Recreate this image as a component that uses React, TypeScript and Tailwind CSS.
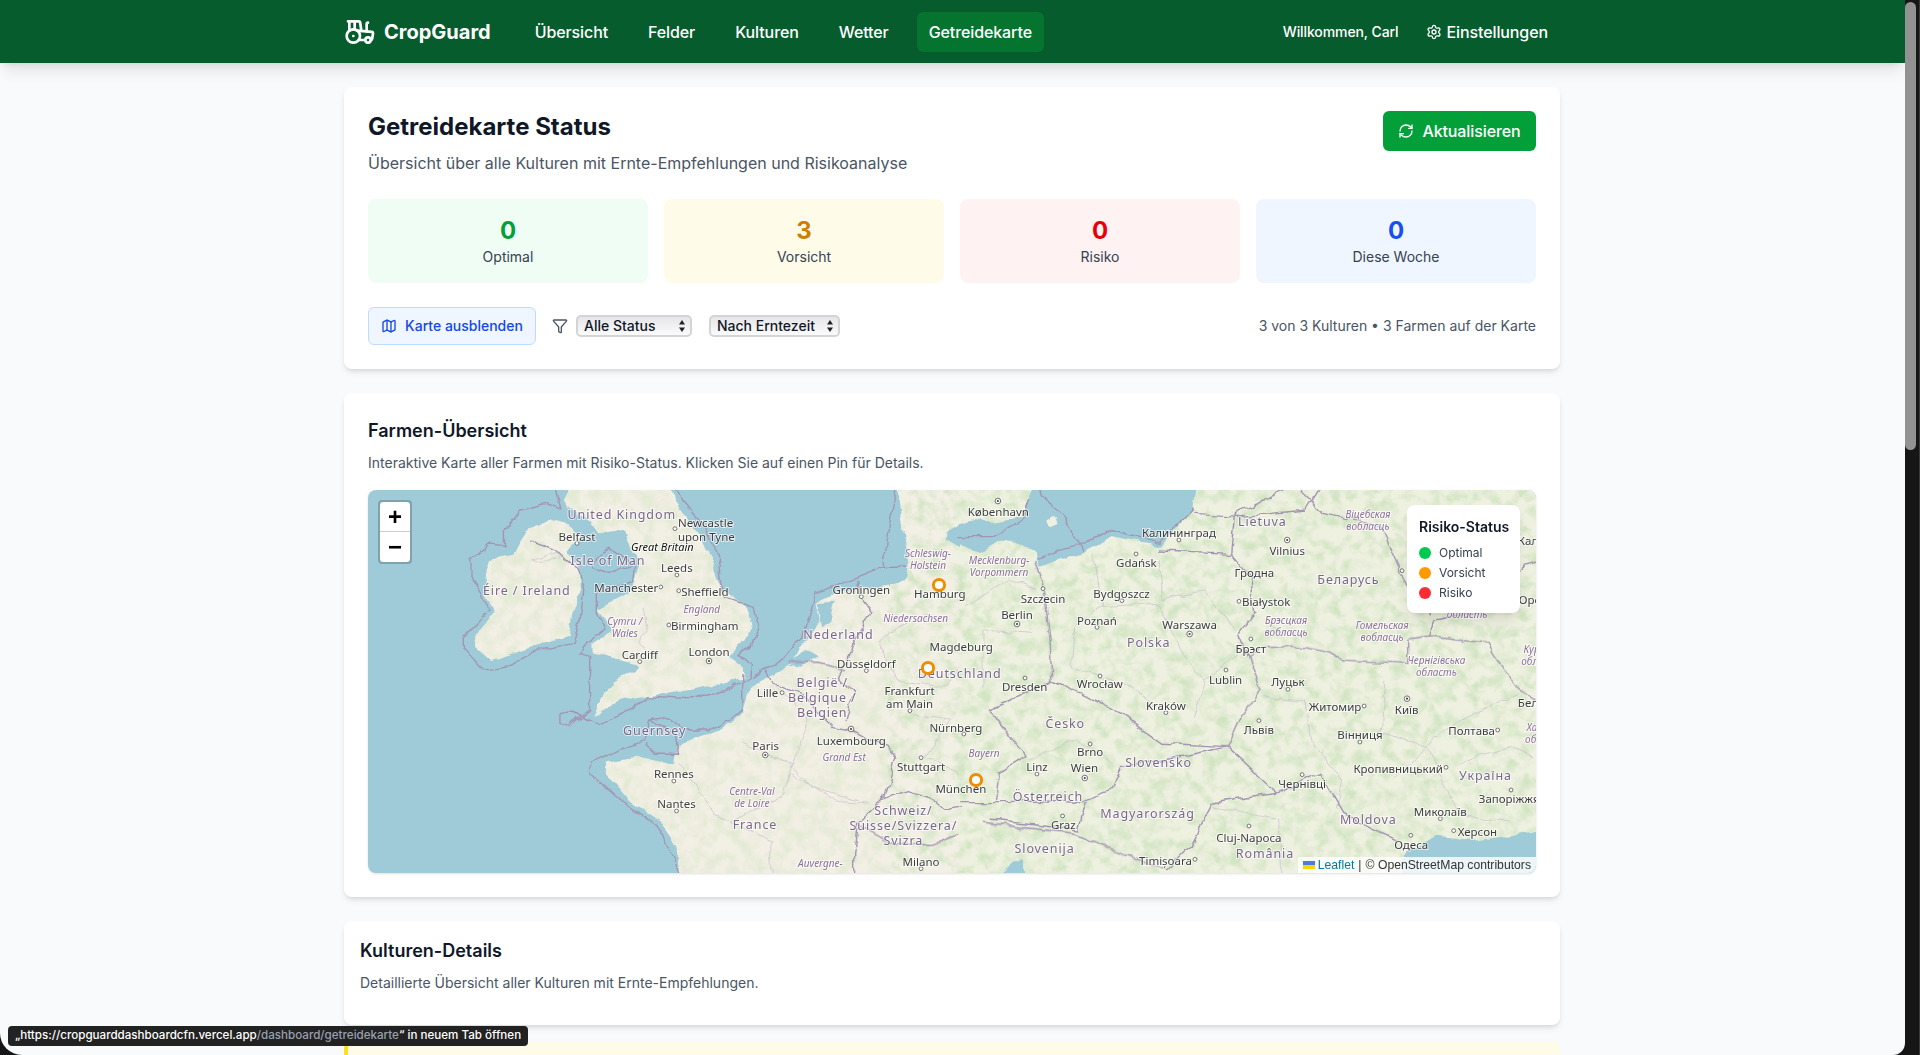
import { Filter, Map as MapIcon, RefreshCw, Settings, Tractor } from 'lucide-react';

type Kind = 'city' | 'country' | 'region' | 'island';
type Label = [string, number, number, Kind];

// label positions are measured on two crops of the map, these turn them into map pixels
const westX = (x: number) => x / 2.613 - 8;
const eastX = (x: number) => x / 2.613 + 592;
const mapY = (y: number) => y / 3 - 10;

const westLabels: Label[] = [
  ['United Kingdom', 684, 102, 'country'],
  ['Newcastle', 903, 127, 'city'],
  ['upon Tyne', 905, 168, 'city'],
  ['Belfast', 567, 168, 'city'],
  ['Great Britain', 790, 200, 'island'],
  ['Isle of Man', 648, 240, 'country'],
  ['Leeds', 828, 262, 'city'],
  ['Manchester', 696, 322, 'city'],
  ['Sheffield', 901, 334, 'city'],
  ['Éire / Ireland', 436, 331, 'country'],
  ['England', 893, 388, 'region'],
  ['Cymru /', 692, 422, 'region'],
  ['Wales', 692, 458, 'region'],
  ['Birmingham', 901, 437, 'city'],
  ['Cardiff', 731, 522, 'city'],
  ['London', 912, 514, 'city'],
  ['Groningen', 1310, 329, 'city'],
  ['Schleswig-', 1484, 218, 'region'],
  ['Holstein', 1484, 254, 'region'],
  ['Hamburg', 1515, 340, 'city'],
  ['Niedersachsen', 1452, 414, 'region'],
  ['Nederland', 1250, 462, 'country'],
  ['Düsseldorf', 1323, 550, 'city'],
  ['België /', 1208, 607, 'country'],
  ['Belgique /', 1208, 652, 'country'],
  ['Belgien', 1208, 697, 'country'],
  ['Frankfurt', 1436, 630, 'city'],
  ['am Main', 1436, 671, 'city'],
  ['Lille', 1065, 638, 'city'],
  ['Guernsey', 770, 752, 'country'],
  ['Luxembourg', 1284, 780, 'city'],
  ['Paris', 1060, 797, 'city'],
  ['Grand Est', 1265, 832, 'region'],
  ['Stuttgart', 1466, 860, 'city'],
  ['Rennes', 820, 880, 'city'],
  ['Nantes', 827, 970, 'city'],
  ['Centre-Val', 1024, 932, 'region'],
  ['de Loire', 1024, 968, 'region'],
  ['France', 1032, 1034, 'country'],
  ['Schweiz/', 1420, 990, 'country'],
  ['Suisse/Svizzera/', 1420, 1035, 'country'],
  ['Svizra', 1420, 1080, 'country'],
  ['Milano', 1466, 1143, 'city'],
  ['Auvergne-', 1203, 1150, 'region'],
  ['Magdeburg', 1571, 500, 'city'],
  ['Deutschland', 1567, 580, 'country'],
  ['Nürnberg', 1557, 741, 'city'],
  ['München', 1570, 926, 'city'],
];

const eastLabels: Label[] = [
  ['København', 100, 94, 'city'],
  ['Калининград', 572, 156, 'city'],
  ['Lietuva', 790, 125, 'country'],
  ['Vilnius', 855, 211, 'city'],
  ['Гродна', 769, 276, 'city'],
  ['Gdańsk', 461, 247, 'city'],
  ['Mecklenburg-', 102, 240, 'region'],
  ['Vorpommern', 102, 276, 'region'],
  ['Szczecin', 217, 354, 'city'],
  ['Bydgoszcz', 422, 340, 'city'],
  ['Białystok', 800, 364, 'city'],
  ['Berlin', 149, 402, 'city'],
  ['Poznań', 358, 420, 'city'],
  ['Warszawa', 600, 434, 'city'],
  ['Polska', 493, 487, 'country'],
  ['Брэст', 760, 505, 'city'],
  ['Dresden', 169, 619, 'city'],
  ['Wrocław', 365, 611, 'city'],
  ['Lublin', 694, 598, 'city'],
  ['Луцьк', 857, 604, 'city'],
  ['Київ', 1167, 688, 'city'],
  ['Kraków', 538, 676, 'city'],
  ['Житомир', 980, 680, 'city'],
  ['Česko', 275, 731, 'country'],
  ['Львів', 781, 749, 'city'],
  ['Вінниця', 1045, 764, 'city'],
  ['Полтава', 1337, 750, 'city'],
  ['Brno', 340, 815, 'city'],
  ['Bayern', 63, 818, 'region'],
  ['Slovensko', 519, 847, 'country'],
  ['Linz', 201, 859, 'city'],
  ['Wien', 325, 863, 'city'],
  ['Кропивницький', 1145, 864, 'city'],
  ['Україна', 1373, 887, 'country'],
  ['Чернівці', 894, 911, 'city'],
  ['Österreich', 230, 950, 'country'],
  ['Запоріжжя', 1435, 956, 'city'],
  ['Миколаїв', 1255, 994, 'city'],
  ['Magyarország', 490, 1001, 'country'],
  ['Moldova', 1067, 1019, 'country'],
  ['Graz', 270, 1034, 'city'],
  ['Херсон', 1352, 1053, 'city'],
  ['Cluj-Napoca', 755, 1071, 'city'],
  ['Одеса', 1179, 1093, 'city'],
  ['Slovenija', 221, 1105, 'country'],
  ['România', 797, 1121, 'country'],
  ['Timișoara', 537, 1140, 'city'],
  ['Віцебская', 1066, 103, 'region'],
  ['вобласць', 1066, 139, 'region'],
  ['Брэсцкая', 852, 421, 'region'],
  ['вобласць', 852, 457, 'region'],
  ['Гомельская', 1103, 436, 'region'],
  ['вобласць', 1103, 472, 'region'],
  ['Чернігівська', 1245, 541, 'region'],
  ['область', 1245, 577, 'region'],
  ['Беларусь', 1015, 297, 'country'],
  ['Курська', 1520, 508, 'region'],
  ['область', 1520, 544, 'region'],
  ['Харківська', 1545, 742, 'region'],
  ['область', 1530, 778, 'region'],
  ['Кал', 1484, 180, 'city'],
  ['Орел', 1498, 358, 'city'],
  ['Бел', 1484, 668, 'city'],
  ['область', 1325, 402, 'region'],
];

const westDots = [
  [823, 146], [567, 190], [828, 285], [786, 321], [833, 332], [807, 435], [731, 545],
  [1310, 350], [1323, 572], [1437, 692], [1103, 638], [1466, 833], [820, 903], [827, 993], [1466, 1166],
];
const westRings = [[912, 543], [1283, 747], [1059, 825]];
const eastDots = [
  [572, 180], [460, 222], [217, 326], [423, 362], [729, 364], [358, 442], [760, 477], [170, 594],
  [366, 588], [695, 570], [857, 628], [538, 698], [1056, 678], [781, 722], [1045, 786], [1405, 750],
  [340, 792], [201, 882], [1270, 862], [894, 884], [1440, 930], [1255, 1016], [1290, 1052], [755, 1038],
  [1178, 1066], [268, 1008], [614, 1138], [1155, 272], [10, 762],
];
const eastRings = [[99, 63], [149, 432], [600, 462], [855, 180], [326, 894], [1168, 656]];

const landWest = [
  'M440 145 L500 120 L540 130 L570 170 L540 215 L570 260 L575 330 L555 400 L545 470 L480 490 L400 520 L340 540 L310 510 L300 470 L335 420 L355 390 L330 350 L325 290 L340 240 L400 225 L420 180 Z',
  'M530 60 L560 0 L810 0 L820 60 L850 110 L890 170 L920 240 L950 330 L1010 380 L1025 430 L1005 490 L960 530 L1000 565 L1005 590 L960 615 L900 620 L840 635 L740 650 L680 665 L610 705 L640 650 L660 600 L720 570 L730 555 L680 540 L640 530 L605 520 L605 490 L660 450 L640 420 L620 390 L700 340 L720 300 L730 260 L700 190 L690 150 L620 160 L590 110 L540 80 Z',
  'M840 1220 L830 1100 L780 1020 L700 960 L640 880 L640 850 L740 830 L820 850 L830 790 L920 760 L1000 700 L1020 620 L1100 570 L1130 550 L1170 480 L1200 420 L1190 370 L1240 340 L1400 310 L1420 300 L1435 250 L1420 150 L1410 60 L1405 0 L1568 0 L1568 1220 Z',
];
const seaWest = [
  'M1568 130 L1540 150 L1530 180 L1568 205 Z',
  'M1195 370 L1240 365 L1225 420 L1205 440 Z',
  'M1120 560 L1165 510 L1200 535 L1140 565 Z',
];
const landEast = 'M-2 0 H1540 V1220 H-2 Z';
const seaEast = [
  'M200 0 L620 0 L610 90 L525 200 L460 185 L395 170 L320 215 L205 260 L195 215 L150 185 L100 185 L60 215 L-2 195 L-2 130 L40 120 L80 130 L160 110 L180 60 Z',
  'M1140 1220 L1170 1110 L1250 1070 L1350 1085 L1540 1050 L1540 1220 Z',
  'M100 1220 L130 1150 L170 1140 L170 1220 Z',
];
const islandEast = 'M225 125 L245 110 L255 135 L235 145 Z';

const bordersWest = [
  'M505 0 L525 90 L490 70 L420 90 L380 150 L380 200 L340 195 L290 240 L290 290 L340 390 L270 470 L270 500 L325 570 L390 560 L470 510 L560 490 L575 420 L585 330 L570 270 L520 215 L450 180',
  'M815 0 L840 60 L900 140 L940 250 L950 350 L1030 380 L1040 430 L1020 500 L985 530 L1025 550 L1025 590 L960 630 L870 660 L750 650 L720 680 L620 730 L560 700 L525 700 L525 730 L550 740 L570 715 L600 690 L600 530 L575 520 L610 470 L640 450 L620 400 L620 340 L715 300 L720 260 L650 205 L620 220 L610 260 L650 280 L710 260',
  'M1030 590 L1060 565 L1105 540 L1160 470 L1190 340 L1300 290 L1360 262 L1430 262',
  'M1000 580 L1000 690 L910 750 L860 750 L800 710 L760 720 L740 780 L600 850 L600 880 L680 960 L770 1030 L820 1130 L850 1220',
  'M745 790 L770 820 L830 820 L820 760 L760 720',
  'M1060 570 L1080 610 L1160 650 L1230 740 L1280 750 L1310 770 L1380 800 L1400 830 L1370 960 L1430 935 L1500 960 L1530 990 L1568 980',
  'M1370 960 L1300 1030 L1290 1120 L1290 1220',
  'M1300 300 L1310 350 L1340 400 L1290 480 L1280 520 L1250 590 L1290 640 L1270 720',
  'M1120 550 L1200 550 L1270 570',
  'M1300 1030 L1400 1095 L1500 1090 L1568 1060',
  'M1405 0 L1370 240 L1370 262',
];
const thinWest = [
  'M1080 610 L1170 720 L1130 860 L1180 920 L1300 960',
  'M1000 790 L1130 850 L1100 960 L970 1020 L930 1000 L830 850',
  'M1130 880 L1240 960 L1330 970',
  'M970 1020 L1070 1090 L1080 1220',
  'M1440 420 L1360 480 L1400 600 L1520 620 L1568 560',
  'M1430 700 L1540 720 L1480 830 L1568 880',
  'M740 380 L750 450 L730 490 L770 540',
  'M520 215 L450 240 L470 250 L530 225',
];
const bordersEast = [
  'M195 240 L220 330 L235 480 L240 600 L320 640 L420 700 L530 790 L700 800',
  'M240 600 L80 690 L100 720 L170 830 L100 880 L90 960',
  'M-2 965 L130 965 L190 960 L300 970 L320 960 L390 930 L420 860 L530 840 L700 800',
  'M700 800 L740 700 L785 630 L755 530 L800 500 L870 495 L970 520 L1000 540 L1170 550 L1170 480 L1230 470 L1380 490 L1450 620 L1540 690',
  'M520 210 L710 220 L760 290 L770 400 L730 460 L755 530',
  'M710 220 L720 100 L760 80 L890 0',
  'M610 100 L740 110 L900 90 L950 0',
  'M700 800 L830 940 L940 880 L1000 1000 L1140 1080',
  'M660 970 L600 1100 L540 1170',
  'M660 970 L830 940',
  'M80 1020 L310 1050 L330 960',
  'M60 1030 L300 1060 L380 1100 L540 1170',
  'M1230 470 L1240 420 L1400 380 L1470 260 L1540 240',
  'M890 30 L950 100 L1100 140 L1170 320 L1230 400',
  'M200 0 L240 80 L270 110 L320 215',
  'M610 90 L520 190 L440 165 L395 150 L320 190 L200 235',
  'M180 60 L160 120 L80 170 L-2 170',
];
const thinEast = [
  'M350 220 L370 380 L300 440 L290 560 L365 590 L450 620 L540 700',
  'M370 380 L520 370 L580 520 L640 600 L610 720',
  'M520 230 L530 360 L640 330 L720 450',
  'M640 600 L730 520',
  'M790 650 L900 660 L920 800 L1000 900 L980 990',
  'M1110 600 L1100 760 L1220 800 L1130 900',
  'M1220 800 L1300 720 L1460 640',
  'M1300 850 L1440 800 L1500 830',
  'M1220 800 L1300 1000 L1440 1030',
  'M60 620 L60 450 L190 460',
  'M10 380 L130 300 L195 330',
  'M660 980 L830 1020 L840 1220',
  'M180 840 L300 780 L400 850',
];

const cityDot = (x: number, y: number, ring: boolean, key: string) => (
  <g key={key}>
    <circle cx={x} cy={y} r={ring ? 2.8 : 1.9} fill="#fff" stroke="#555" strokeWidth={0.8} />
    {ring && <circle cx={x} cy={y} r={1.1} fill="#444" />}
  </g>
);

function MapLabel({ label, x }: { label: Label; x: number }) {
  const [text, , y, kind] = label;
  const common = {
    x,
    y: mapY(y),
    textAnchor: 'middle' as const,
    dominantBaseline: 'central' as const,
    paintOrder: 'stroke',
    stroke: 'rgba(255,255,255,0.65)',
    strokeWidth: 2,
    fontFamily: '"Noto Sans", sans-serif',
  };
  if (kind === 'country') {
    return <text {...common} fontSize={12.5} letterSpacing={0.9} fill="#7a6689">{text}</text>;
  }
  if (kind === 'region') {
    return <text {...common} fontSize={10} fontStyle="italic" fill="#8b6f97">{text}</text>;
  }
  if (kind === 'island') {
    return <text {...common} fontSize={11} fontStyle="italic" fill="#111">{text}</text>;
  }
  return <text {...common} fontSize={11.5} fill="#3d3d3d">{text}</text>;
}

function MapDrawing() {
  const west = 'translate(-8 -10) scale(0.3827 0.3333)';
  const east = 'translate(592 -10) scale(0.3827 0.3333)';
  return (
    <svg viewBox="0 0 1168 383" className="block h-full w-full">
      <defs>
        <clipPath id="land">
          {landWest.map((d) => <path key={d} d={d} transform={west} />)}
          <path d={landEast} transform={east} />
        </clipPath>
        <filter id="forest" x="0" y="0" width="100%" height="100%">
          <feTurbulence type="fractalNoise" baseFrequency="0.08" numOctaves={5} seed={7} />
          <feColorMatrix
            type="matrix"
            values="0 0 0 0 0.64  0 0 0 0 0.78  0 0 0 0 0.54  2.6 0 0 0 -1.05"
          />
        </filter>
        <filter id="wobble" x="-5%" y="-5%" width="110%" height="110%">
          <feTurbulence type="fractalNoise" baseFrequency="0.05" numOctaves={3} seed={3} />
          <feDisplacementMap in="SourceGraphic" scale={9} xChannelSelector="R" yChannelSelector="G" />
        </filter>
      </defs>

      <g filter="url(#wobble)">
        {landWest.map((d) => <path key={d} d={d} transform={west} fill="#f2efe4" />)}
        <path d={landEast} transform={east} fill="#eef0e0" />
        <g clipPath="url(#land)">
          <rect x="0" y="-10" width="520" height="410" filter="url(#forest)" opacity={0.5} />
          <rect x="520" y="-10" width="680" height="410" filter="url(#forest)" />
        </g>

        {seaWest.map((d) => <path key={d} d={d} transform={west} fill="#9fcbd9" />)}
        {seaEast.map((d) => <path key={d} d={d} transform={east} fill="#9fcbd9" />)}
        <path d={islandEast} transform={east} fill="#eef0e0" />

        <g fill="none" stroke="#c2b8cc" strokeWidth={0.7} opacity={0.85}>
          {thinWest.map((d) => <path key={d} d={d} transform={west} vectorEffect="non-scaling-stroke" />)}
          {thinEast.map((d) => <path key={d} d={d} transform={east} vectorEffect="non-scaling-stroke" />)}
        </g>
        <g fill="none" stroke="#a396b3" strokeWidth={1.4} strokeLinejoin="round">
          {bordersWest.map((d) => <path key={d} d={d} transform={west} vectorEffect="non-scaling-stroke" />)}
          {bordersEast.map((d) => <path key={d} d={d} transform={east} vectorEffect="non-scaling-stroke" />)}
        </g>
      </g>

      {westDots.map(([x, y]) => cityDot(westX(x), mapY(y), false, `w${x}-${y}`))}
      {westRings.map(([x, y]) => cityDot(westX(x), mapY(y), true, `wr${x}-${y}`))}
      {eastDots.map(([x, y]) => cityDot(eastX(x), mapY(y), false, `e${x}-${y}`))}
      {eastRings.map(([x, y]) => cityDot(eastX(x), mapY(y), true, `er${x}-${y}`))}

      {westLabels.map((l) => <MapLabel key={l[0] + l[1]} label={l} x={westX(l[1])} />)}
      {eastLabels.map((l) => <MapLabel key={l[0] + l[1]} label={l} x={eastX(l[1])} />)}

      {/* farm pins */}
      <circle cx={571} cy={95} r={5.6} fill="#fff" stroke="#f08c00" strokeWidth={3} />
      <circle cx={560} cy={178} r={5.6} fill="#fff" stroke="#f08c00" strokeWidth={3} />
      <circle cx={608} cy={290} r={5.6} fill="#fff" stroke="#f08c00" strokeWidth={3} />
    </svg>
  );
}

function StatBox({ value, label, box, color }: { value: string; label: string; box: string; color: string }) {
  return (
    <div className={`rounded-lg p-4 text-center ${box}`}>
      <div className={`text-2xl font-bold ${color}`}>{value}</div>
      <div className="text-sm text-gray-700">{label}</div>
    </div>
  );
}

function NativeSelect({ label, width }: { label: string; width: string }) {
  return (
    <div className={`flex h-[22px] items-center justify-between rounded-[5px] border-2 border-[#d2d4d7] bg-gradient-to-b from-[#e6e6e8] to-[#fbfbfb] pr-[4px] pl-[6px] text-sm font-medium text-gray-900 ${width}`}>
      <span>{label}</span>
      <svg viewBox="0 0 8 14" className="h-[14px] w-[8px]">
        <path d="M4 1 L7 5.5 H1 Z M4 13 L1 8.5 H7 Z" fill="#222" />
      </svg>
    </div>
  );
}

export default function App() {
  return (
    <div className="relative flex h-screen overflow-hidden bg-[#161616] font-['Inter',sans-serif]">
      <div className="h-full flex-1 overflow-hidden rounded-br-[12px] rounded-bl-[22px] bg-gray-50">
        {/* Nav */}
        <nav className="relative z-10 h-[63px] bg-[#065c2d] text-white shadow-lg">
          <div className="ml-[312px] flex h-full w-[1280px] items-center justify-between px-8">
            <div className="flex items-center">
              <div className="flex items-center gap-2">
                <Tractor className="h-8 w-8" />
                <span className="text-xl font-bold">CropGuard</span>
              </div>
              <div className="ml-8 flex items-center gap-4 font-medium tracking-[-0.1px]">
                <a className="rounded-md px-3 py-2">Übersicht</a>
                <a className="rounded-md px-3 py-2">Felder</a>
                <a className="rounded-md px-3 py-2">Kulturen</a>
                <a className="rounded-md px-3 py-2">Wetter</a>
                <a className="rounded-md bg-[#04742f] px-3 py-2">Getreidekarte</a>
              </div>
            </div>
            <div className="flex items-center gap-4 tracking-[-0.1px]">
              <span className="text-sm font-medium">Willkommen, Carl</span>
              <a className="flex items-center gap-1 rounded-md px-3 py-2 font-medium">
                <Settings className="h-4 w-4" />
                Einstellungen
              </a>
            </div>
          </div>
        </nav>

        <main className="ml-[312px] w-[1280px] space-y-6 px-8 pt-6">
          {/* Status */}
          <section className="rounded-lg bg-white p-6 shadow-md">
            <div className="flex items-start justify-between">
              <div>
                <h1 className="text-2xl font-bold text-gray-900">Getreidekarte Status</h1>
                <p className="mt-2 text-gray-600">Übersicht über alle Kulturen mit Ernte-Empfehlungen und Risikoanalyse</p>
              </div>
              <button className="flex h-10 w-[153px] items-center justify-center gap-2 rounded-md bg-[#03a03a] font-medium tracking-[-0.1px] text-white">
                <RefreshCw className="h-4 w-4" />
                Aktualisieren
              </button>
            </div>

            <div className="mt-6 grid grid-cols-4 gap-4">
              <StatBox value="0" label="Optimal" box="bg-green-50" color="text-[#03a03a]" />
              <StatBox value="3" label="Vorsicht" box="bg-yellow-50" color="text-[#cc7f00]" />
              <StatBox value="0" label="Risiko" box="bg-red-50" color="text-red-600" />
              <StatBox value="0" label="Diese Woche" box="bg-blue-50" color="text-[#1650f0]" />
            </div>

            <div className="mt-6 flex items-center justify-between">
              <div className="flex items-center">
                <button className="flex h-[38px] w-[168px] items-center justify-center gap-2 rounded-md border border-blue-200 bg-blue-50 text-sm font-medium text-blue-700">
                  <MapIcon className="h-4 w-4" />
                  Karte ausblenden
                </button>
                <Filter className="ml-4 h-4 w-4 text-gray-600" />
                <div className="ml-2 flex items-center gap-[17px]">
                  <NativeSelect label="Alle Status" width="w-[116px]" />
                  <NativeSelect label="Nach Erntezeit" width="w-[131px]" />
                </div>
              </div>
              <span className="text-sm text-gray-600">3 von 3 Kulturen • 3 Farmen auf der Karte</span>
            </div>
          </section>

          {/* Map */}
          <section className="rounded-lg bg-white p-6 shadow-md">
            <h2 className="text-lg font-semibold text-gray-900">Farmen-Übersicht</h2>
            <p className="mt-2 mb-[17px] text-sm text-gray-600">Interaktive Karte aller Farmen mit Risiko-Status. Klicken Sie auf einen Pin für Details.</p>
            <div className="relative h-[383px] overflow-hidden rounded-lg bg-[#9fcbd9] shadow-sm">
              <MapDrawing />

              <div className="absolute top-[10px] left-[10px] w-[34px] rounded border-2 border-black/20 bg-clip-padding font-['Liberation_Sans',sans-serif] text-black">
                <div className="flex h-[30px] items-center justify-center rounded-t-sm border-b border-[#ccc] bg-white text-[24px] font-bold">+</div>
                <div className="flex h-[30px] items-center justify-center rounded-b-sm bg-white text-[24px] font-bold">−</div>
              </div>

              <div className="absolute top-[15px] left-[1039px] w-[113px] rounded-lg bg-white px-3 pt-3 pb-[10px] shadow-lg">
                <div className="mb-[6px] text-sm font-semibold whitespace-nowrap text-gray-900">Risiko-Status</div>
                <div className="flex h-5 items-center gap-2 text-xs text-gray-700">
                  <span className="h-3 w-3 rounded-full bg-green-500" />Optimal
                </div>
                <div className="flex h-5 items-center gap-2 text-xs text-gray-700">
                  <span className="h-3 w-3 rounded-full bg-amber-500" />Vorsicht
                </div>
                <div className="flex h-5 items-center gap-2 text-xs text-gray-700">
                  <span className="h-3 w-3 rounded-full bg-red-500" />Risiko
                </div>
              </div>

              <div className="absolute right-0 bottom-0 flex h-4 items-center bg-white/80 px-[5px] font-['Liberation_Sans',sans-serif] text-[12.2px] text-[#333]">
                <svg viewBox="0 0 12 8" className="mr-[3px] h-2 w-3">
                  <rect width="12" height="4" fill="#4C7BE1" />
                  <rect y="4" width="12" height="4" fill="#FFD500" />
                </svg>
                <span className="text-[#0078a8]">Leaflet</span>
                <span className="mx-1">|</span>
                © OpenStreetMap contributors
              </div>
            </div>
          </section>

          {/* Details */}
          <section className="rounded-lg bg-white px-4 pt-4 pb-8 shadow-md">
            <h2 className="text-lg font-semibold text-gray-900">Kulturen-Details</h2>
            <p className="mt-2 text-sm text-gray-600">Detaillierte Übersicht aller Kulturen mit Ernte-Empfehlungen.</p>
          </section>

          <section className="-mt-2 h-24 rounded-lg border-l-4 border-yellow-300 bg-yellow-50" />
        </main>
      </div>

      {/* Scrollbar */}
      <div className="h-full w-[15px] border-r border-[#3a3a3a] pt-[2px]">
        <div className="h-[448px] w-[11px] rounded-full bg-[#929292]" />
      </div>

      {/* Link preview */}
      <div className="absolute bottom-[9px] left-2 flex h-5 items-center rounded bg-[#222] px-[7px] text-[11.6px] font-medium whitespace-nowrap text-white">
        „https://cropguarddashboardcfn.vercel.app
        <span className="text-gray-400">/dashboard/getreidekarte</span>
        “ in neuem Tab öffnen
      </div>
    </div>
  );
}
